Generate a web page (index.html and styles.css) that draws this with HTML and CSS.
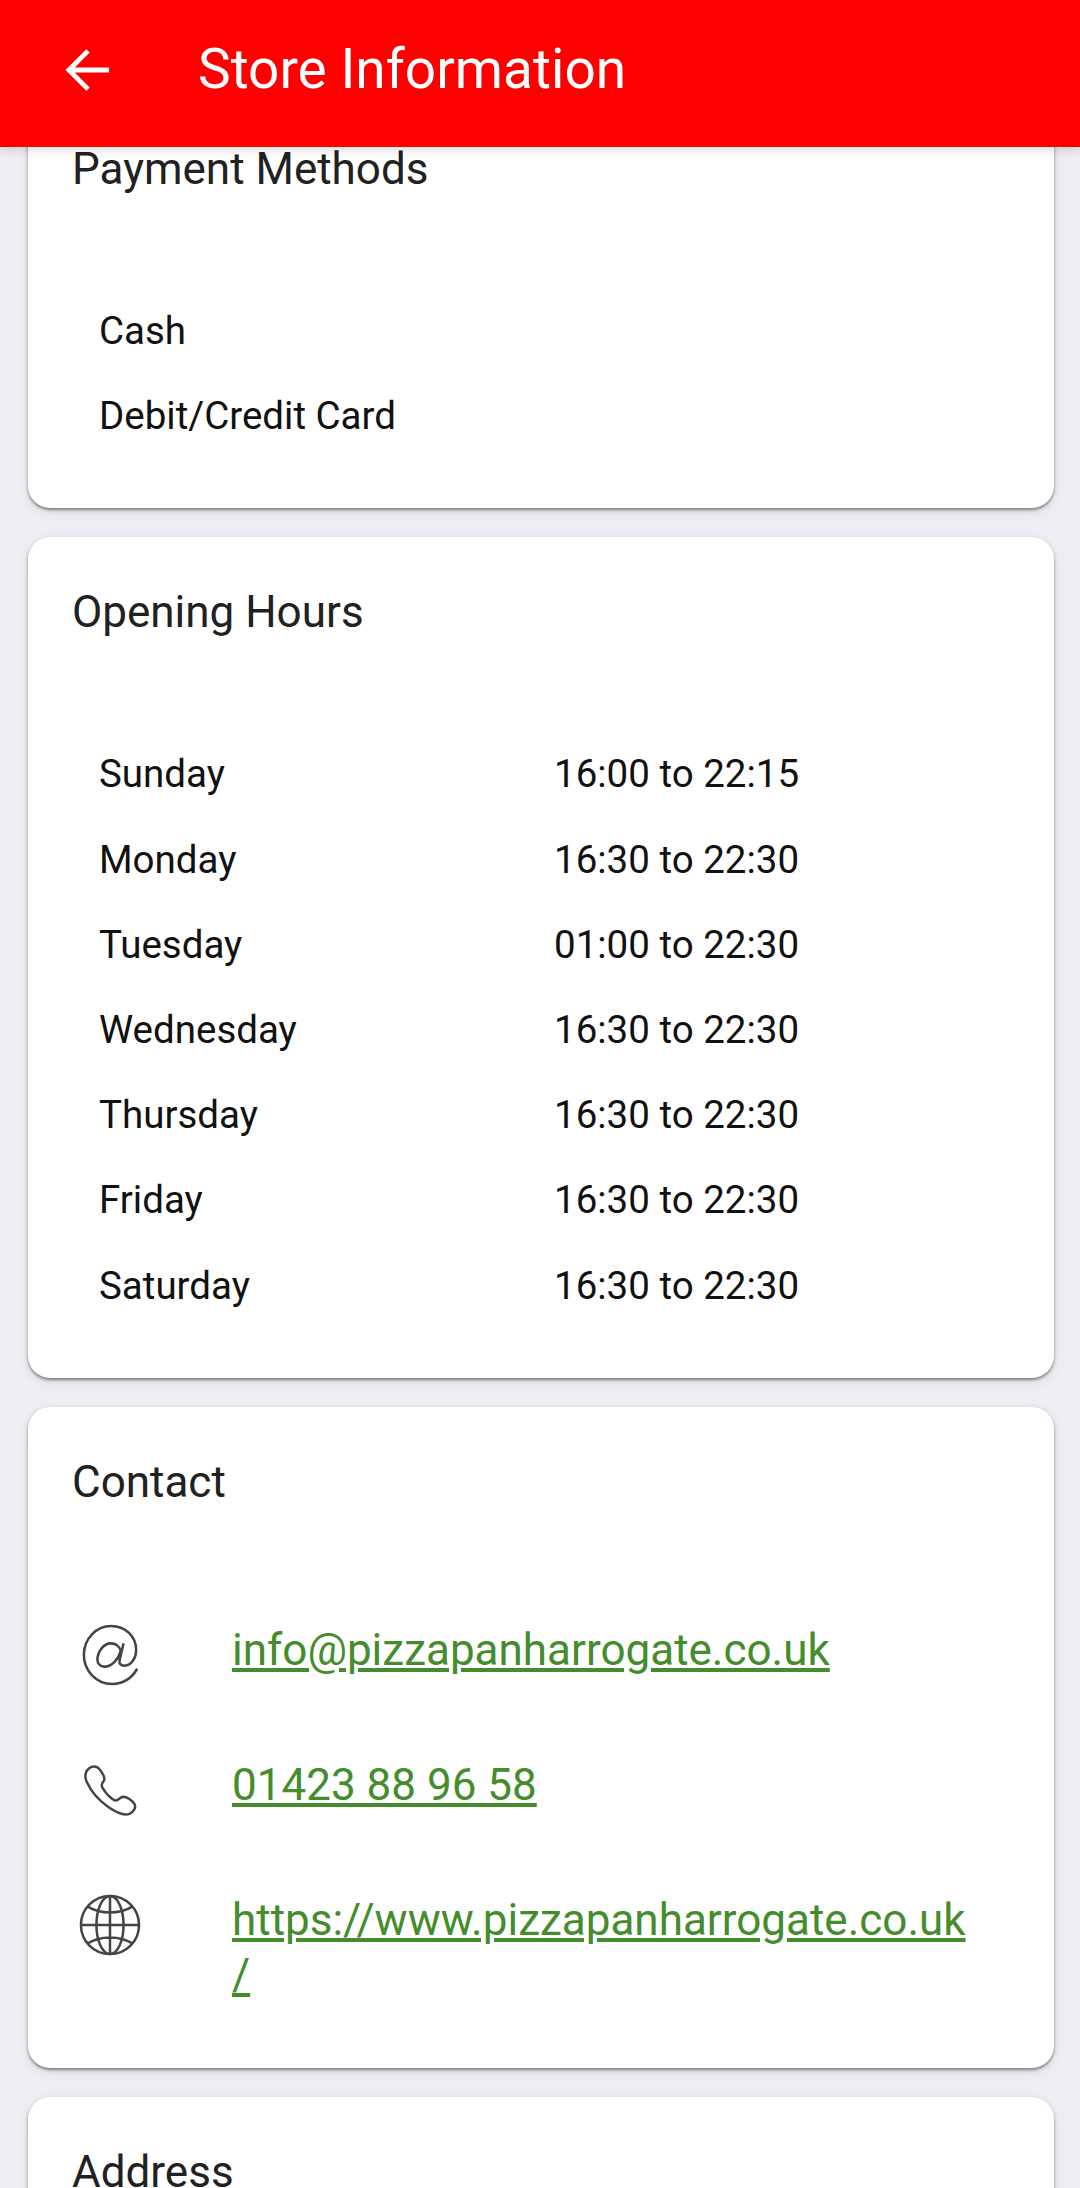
FILE: index.html
```html
<!DOCTYPE html>
<html lang="en">
<head>
    <meta charset="UTF-8">
    <meta name="viewport" content="width=device-width, initial-scale=1.0">
    <title>Store Information</title>
    <link rel="stylesheet" href="styles.css">
</head>
<body>
    <header class="app-bar">
        <svg class="back-icon" viewBox="0 0 48 48" aria-hidden="true">
            <path d="M46 24H5M24 4 4 24 24 44" fill="none" stroke="#fff" stroke-width="5"/>
        </svg>
        <h1 class="app-title">Store Information</h1>
    </header>
    <main class="content">
        <section class="card card-payment">
            <h2 class="card-title">Payment Methods</h2>
            <div class="rows">
                <div class="row">Cash</div>
                <div class="row">Debit/Credit Card</div>
            </div>
        </section>
        <section class="card">
            <h2 class="card-title">Opening Hours</h2>
            <div class="rows">
                <div class="row"><span class="day">Sunday</span><span>16:00 to 22:15</span></div>
                <div class="row"><span class="day">Monday</span><span>16:30 to 22:30</span></div>
                <div class="row"><span class="day">Tuesday</span><span>01:00 to 22:30</span></div>
                <div class="row"><span class="day">Wednesday</span><span>16:30 to 22:30</span></div>
                <div class="row"><span class="day">Thursday</span><span>16:30 to 22:30</span></div>
                <div class="row"><span class="day">Friday</span><span>16:30 to 22:30</span></div>
                <div class="row"><span class="day">Saturday</span><span>16:30 to 22:30</span></div>
            </div>
        </section>
        <section class="card">
            <h2 class="card-title">Contact</h2>
            <div class="contacts">
                <div class="contact">
                    <svg class="contact-icon" viewBox="0 0 64 64" aria-hidden="true">
                        <path d="M60 46C55 56 45 62 34 62 18 62 5 48 5 32 5 15 18 2 33 2 48 2 59 13 59 27 59 35 54 43 47 43 43 43 41 41 42 37L46 20M43 28C42 23 38 20 33 20 25 20 19 29 19 37 19 41 22 44 26 44 34 44 41 36 43 28Z" fill="none" stroke="#444" stroke-width="2.600"/>
                    </svg>
                    <a class="contact-link" href="#">info@pizzapanharrogate.co.uk</a>
                </div>
                <div class="contact">
                    <svg class="contact-icon" viewBox="0 0 64 64" aria-hidden="true">
                        <path transform="translate(3.800 3.800) scale(0.880)" d="M7 7C11 3 17 4 20 8 23 12 27 17 25 21 23 24 21 25 23 29 27 36 32 41 37 44 41 46 43 41 47 40 52 40 58 44 61 49 63 53 59 58 55 60 49 62 40 59 30 52 20 45 10 34 5 23 2 17 3 10 7 7Z" fill="none" stroke="#444" stroke-width="2.900"/>
                    </svg>
                    <a class="contact-link" href="#">01423 88 96 58</a>
                </div>
                <div class="contact">
                    <svg class="contact-icon" viewBox="0 0 64 64" aria-hidden="true">
                        <g fill="none" stroke="#444" stroke-width="2.600">
                            <circle cx="32" cy="32" r="30"/>
                            <ellipse cx="32" cy="32" rx="14" ry="30"/>
                            <path d="M32 2V62M2 32H62M9 13C22 21 42 21 55 13M9 51C22 43 42 43 55 51"/>
                        </g>
                    </svg>
                    <a class="contact-link" href="#">https://www.pizzapanharrogate.co.uk/</a>
                </div>
            </div>
        </section>
        <section class="card">
            <h2 class="card-title">Address</h2>
        </section>
    </main>
</body>
</html>
```

FILE: styles.css
```css
html,
body {
    height: 100%;
}
body {
    margin: 0;
    height: 100vh;
    display: flex;
    flex-direction: column;
    overflow: hidden;
    font-family: Roboto, "Liberation Sans", sans-serif;
    background-color: #eeeef4;
}
.app-bar {
    position: relative;
    z-index: 1;
    flex: none;
    height: 147px;
    display: flex;
    align-items: flex-start;
    background-color: #f00;
    box-shadow: 0 2px 10px rgba(0, 0, 0, 0.16);
}
.back-icon {
    width: 46px;
    height: 46px;
    margin: 47px 0 0 65px;
}
.app-title {
    margin: 36px 0 0 87px;
    font-size: 55px;
    line-height: 66px;
    font-weight: 400;
    color: #fff;
}
.content {
    flex: 1;
    min-height: 0;
    display: flex;
    flex-direction: column;
    gap: 29px;
    padding: 0 26px 0 28px;
}
.card {
    flex: none;
    padding: 45px 44px 50px;
    border-radius: 22px;
    background-color: #fff;
    box-shadow: 0 2px 3px rgba(0, 0, 0, 0.42), 0 5px 12px rgba(0, 0, 0, 0.07), 0 0 8px rgba(0, 0, 0, 0.05);
}
.card-payment {
    margin-top: -53px;
}
.card-title {
    margin: 0;
    font-size: 44px;
    line-height: 60px;
    font-weight: 400;
    color: #212121;
}
.rows {
    margin-top: 89px;
}
.row {
    display: flex;
    height: 85.2px;
    align-items: center;
    padding-left: 27px;
    font-size: 38.5px;
    color: #111;
}
.day {
    width: 455px;
}
.contacts {
    margin-top: 111px;
    display: flex;
    flex-direction: column;
    gap: 72px;
    padding-bottom: 15px;
}
.contact {
    display: flex;
    align-items: flex-start;
}
.contact-icon {
    flex: none;
    width: 62px;
    height: 62px;
    margin: 1px 0 0 7px;
}
.contact-link {
    margin-left: 91px;
    width: 745px;
    font-size: 44px;
    line-height: 55px;
    overflow-wrap: anywhere;
    color: #448c2c;
}
```
